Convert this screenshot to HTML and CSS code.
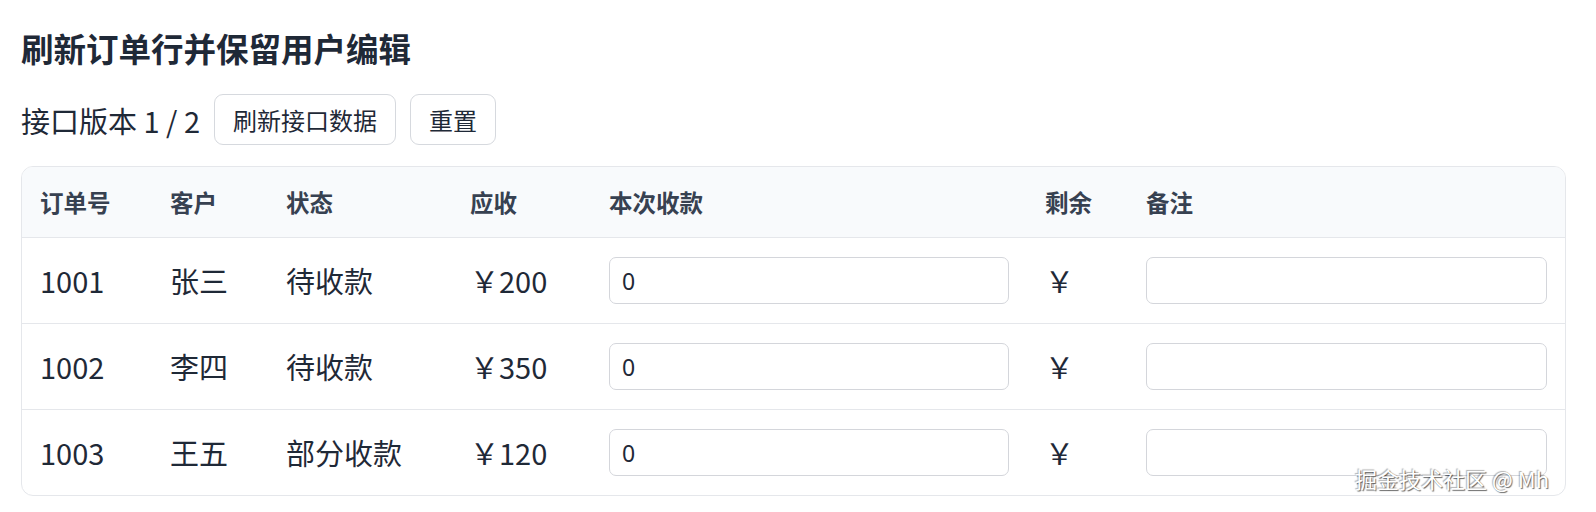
FILE: index.html
```html
<!DOCTYPE html>
<html lang="zh-CN">
<head>
    <meta charset="UTF-8">
    <title>刷新订单行并保留用户编辑</title>
    <link rel="stylesheet" href="styles.css">
</head>
<body>
    <div class="page">
        <h1 class="title">刷新订单行并保留用户编辑</h1>
        <div class="toolbar">
            <span class="version">接口版本 1 / 2</span>
            <button class="btn">刷新接口数据</button>
            <button class="btn">重置</button>
        </div>
        <div class="card">
            <table class="orders">
                <colgroup>
                    <col class="col-id">
                    <col class="col-customer">
                    <col class="col-status">
                    <col class="col-due">
                    <col class="col-pay">
                    <col class="col-left">
                    <col class="col-note">
                </colgroup>
                <thead>
                    <tr>
                        <th>订单号</th>
                        <th>客户</th>
                        <th>状态</th>
                        <th>应收</th>
                        <th>本次收款</th>
                        <th>剩余</th>
                        <th>备注</th>
                    </tr>
                </thead>
                <tbody>
                    <tr>
                        <td>1001</td>
                        <td>张三</td>
                        <td>待收款</td>
                        <td>￥200</td>
                        <td><input class="field" type="text" value="0"></td>
                        <td>￥</td>
                        <td><input class="field" type="text" value=""></td>
                    </tr>
                    <tr>
                        <td>1002</td>
                        <td>李四</td>
                        <td>待收款</td>
                        <td>￥350</td>
                        <td><input class="field" type="text" value="0"></td>
                        <td>￥</td>
                        <td><input class="field" type="text" value=""></td>
                    </tr>
                    <tr>
                        <td>1003</td>
                        <td>王五</td>
                        <td>部分收款</td>
                        <td>￥120</td>
                        <td><input class="field" type="text" value="0"></td>
                        <td>￥</td>
                        <td><input class="field" type="text" value=""></td>
                    </tr>
                </tbody>
            </table>
        </div>
    </div>
    <div class="watermark">掘金技术社区 @ Mh</div>
</body>
</html>
```

FILE: styles.css
```css
body {
    margin: 0;
    font-family: "Noto Sans CJK SC", "Noto Sans", sans-serif;
    color: #1f2937;
    background: #fff;
}
.page {
    padding: 23px 30px 0 21px;
}
.title {
    margin: 0 0 21px;
    font-size: 32.5px;
    line-height: 50px;
    font-weight: 700;
    color: #1f2937;
}
.toolbar {
    display: flex;
    align-items: center;
    gap: 14px;
    height: 51px;
    margin-bottom: 21px;
    font-size: 29px;
}
.btn {
    height: 51px;
    padding: 0 18px;
    font-family: inherit;
    font-size: 24px;
    color: #1f2937;
    background: #fff;
    border: 1px solid #d6d9de;
    border-radius: 9px;
    cursor: pointer;
}
.btn:hover {
    background: #f3f4f6;
}
.card {
    border: 1px solid #e5e7eb;
    border-radius: 12px;
    overflow: hidden;
}
.orders {
    width: 100%;
    border-collapse: collapse;
    table-layout: fixed;
}
.col-id { width: 130px; }
.col-customer { width: 116px; }
.col-status { width: 184px; }
.col-due { width: 139px; }
.col-pay { width: 436px; }
.col-left { width: 101px; }
.orders th {
    padding: 18px 18px 18px;
    line-height: 34px;
    font-size: 23.5px;
    font-weight: 700;
    text-align: left;
    color: #374151;
    background: #f8fafc;
    border-bottom: 1px solid #e5e7eb;
}
.orders td {
    padding: 19px 18px;
    font-size: 29px;
    line-height: 47px;
    border-bottom: 1px solid #e5e7eb;
}
.orders tbody tr:last-child td {
    border-bottom: none;
}
.field {
    display: block;
    box-sizing: border-box;
    width: 100%;
    height: 47px;
    padding: 0 12px;
    font-family: "Noto Sans", sans-serif;
    font-size: 23px;
    color: #1f2937;
    border: 1px solid #d4d6db;
    border-radius: 7px;
    background: #fff;
}
.watermark {
    position: absolute;
    right: 47px;
    bottom: 19px;
    font-size: 22px;
    line-height: 30px;
    color: #fff;
    text-shadow: 1px 1px 1px rgba(0, 0, 0, 0.6), -1px -1px 1px rgba(0, 0, 0, 0.3);
    pointer-events: none;
}
```
